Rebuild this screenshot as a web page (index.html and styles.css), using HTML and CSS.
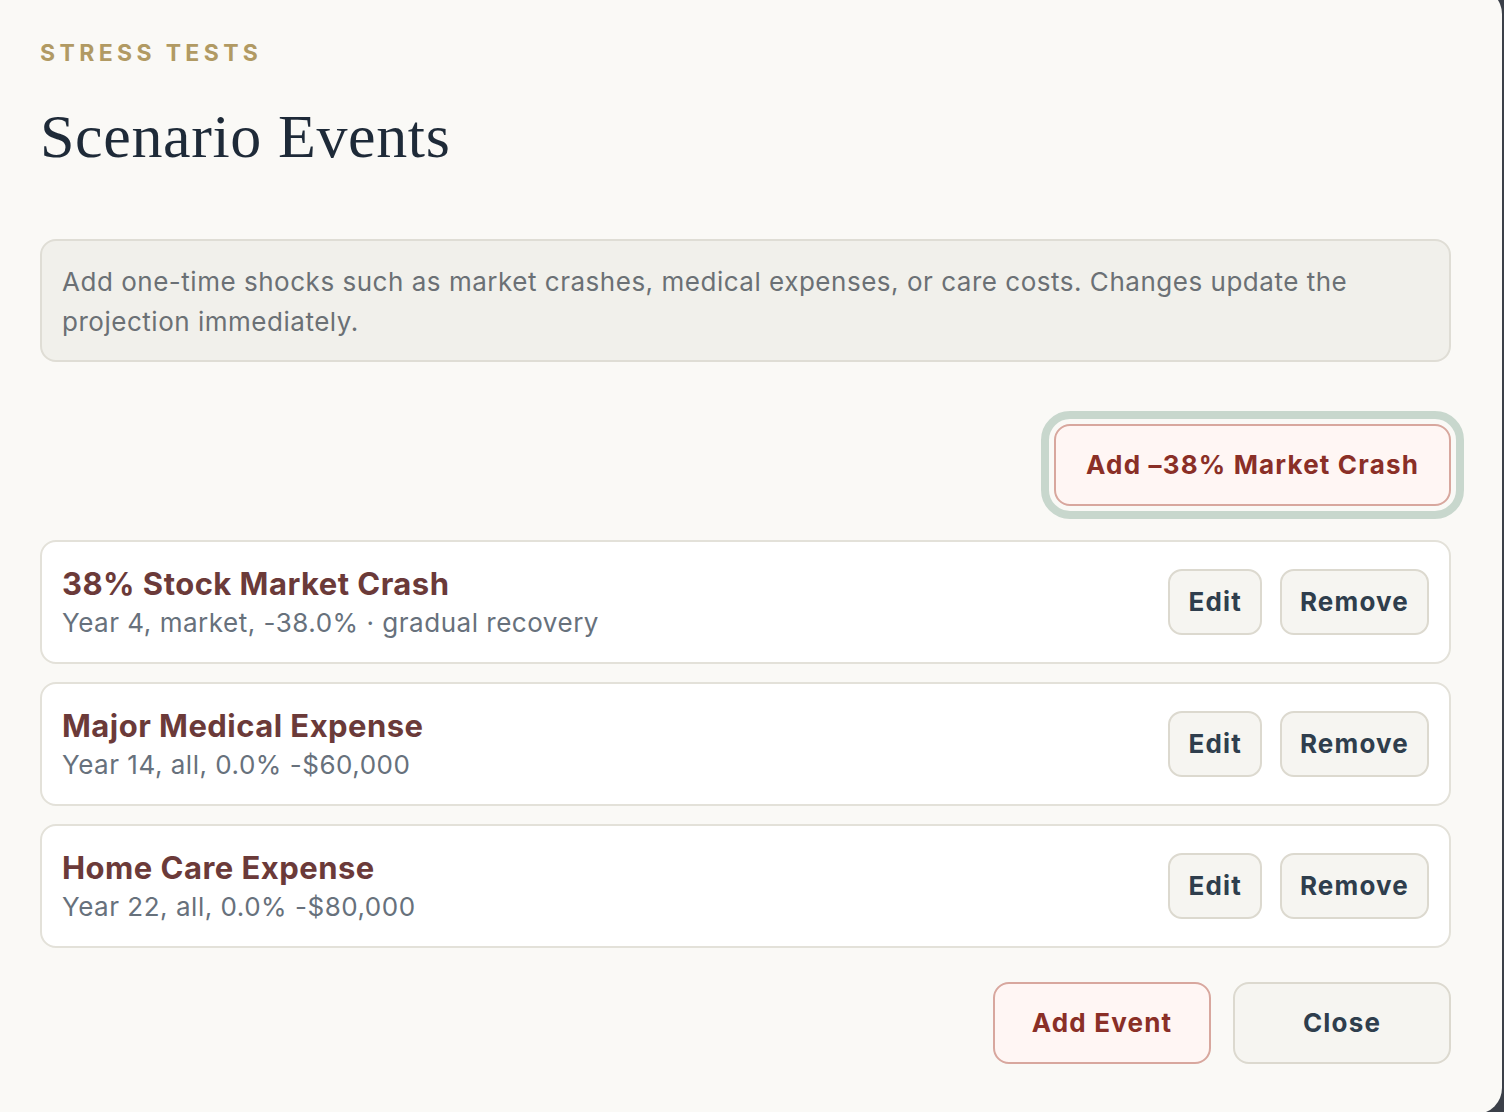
FILE: index.html
```html
<!DOCTYPE html>
<html lang="en">
<head>
<meta charset="utf-8">
<title>Scenario Events</title>
<link rel="stylesheet" href="styles.css">
</head>
<body>
<div class="modal">
  <div class="eyebrow">STRESS TESTS</div>
  <h1 class="title">Scenario Events</h1>
  <div class="info">Add one-time shocks such as market crashes, medical expenses, or care costs. Changes update the projection immediately.</div>
  <div class="quick-row">
    <button class="btn btn-danger btn-lg btn-quick focused">Add –38% Market Crash</button>
  </div>
  <div class="events">
    <div class="event">
      <div class="event-text">
        <div class="event-name">38% Stock Market Crash</div>
        <div class="event-meta">Year 4, market, -38.0% · gradual recovery</div>
      </div>
      <div class="event-actions">
        <button class="btn btn-neutral btn-sm">Edit</button>
        <button class="btn btn-neutral btn-sm">Remove</button>
      </div>
    </div>
    <div class="event">
      <div class="event-text">
        <div class="event-name">Major Medical Expense</div>
        <div class="event-meta">Year 14, all, 0.0% -$60,000</div>
      </div>
      <div class="event-actions">
        <button class="btn btn-neutral btn-sm">Edit</button>
        <button class="btn btn-neutral btn-sm">Remove</button>
      </div>
    </div>
    <div class="event">
      <div class="event-text">
        <div class="event-name">Home Care Expense</div>
        <div class="event-meta">Year 22, all, 0.0% -$80,000</div>
      </div>
      <div class="event-actions">
        <button class="btn btn-neutral btn-sm">Edit</button>
        <button class="btn btn-neutral btn-sm">Remove</button>
      </div>
    </div>
  </div>
  <div class="footer">
    <button class="btn btn-danger btn-lg btn-wide">Add Event</button>
    <button class="btn btn-neutral btn-lg btn-wide">Close</button>
  </div>
</div>
</body>
</html>
```

FILE: styles.css
```css
html, body {
  margin: 0;
  padding: 0;
  background: #3b4049;
  height: 100%;
  overflow: hidden;
}

.modal {
  box-sizing: border-box;
  width: 1502px;
  height: 1126px;
  margin-top: -12px;
  padding: 52px 51px 0 40px;
  background: #faf9f6;
  border-radius: 0 26px 26px 0;
  font-family: Inter, "Noto Sans", sans-serif;
}

.eyebrow {
  font-size: 23px;
  line-height: 26px;
  font-weight: 700;
  letter-spacing: 0.19em;
  color: #b19a63;
}

.title {
  margin: 34px 0 0;
  font-family: "Liberation Serif", "Times New Roman", serif;
  font-weight: 400;
  font-size: 62px;
  line-height: 72px;
  letter-spacing: 0.01em;
  color: #1e2a38;
}

.info {
  margin-top: 67px;
  padding: 21px 20px 18px;
  background: #f1f0eb;
  border: 2px solid #dfddd5;
  border-radius: 16px;
  font-size: 26px;
  line-height: 40px;
  letter-spacing: 0.02em;
  color: #6b7075;
}

.quick-row {
  display: flex;
  justify-content: flex-end;
  margin-top: 62px;
}

.btn {
  box-sizing: border-box;
  font-family: Inter, "Noto Sans", sans-serif;
  font-weight: 700;
  font-size: 26px;
  line-height: 30px;
  letter-spacing: 0.045em;
  border-radius: 16px;
  border: 2px solid;
  cursor: pointer;
}

.btn-lg {
  height: 82px;
  padding: 0 32px;
}

.btn-quick {
  padding: 0 30px;
}

.btn-sm {
  height: 66px;
  padding: 0 18px;
  border-radius: 14px;
}

.btn-wide {
  width: 218px;
  padding-left: 0;
  padding-right: 0;
}

.btn-danger {
  background: #fff6f4;
  border-color: #d8a79e;
  color: #8a2f27;
}

.btn-neutral {
  background: #f6f5f1;
  border-color: #dcd9cf;
  color: #2f3e4d;
}

.focused {
  outline: 8px solid #c8d7cd;
  outline-offset: 5px;
}

.events {
  display: flex;
  flex-direction: column;
  gap: 18px;
  margin-top: 34px;
}

.event {
  display: flex;
  align-items: center;
  justify-content: space-between;
  height: 124px;
  box-sizing: border-box;
  padding: 2px 20px 0;
  background: #ffffff;
  border: 2px solid #e3e1d9;
  border-radius: 16px;
}

.event-actions {
  display: flex;
  gap: 18px;
  margin-top: -2px;
}

.event-name {
  font-size: 31px;
  line-height: 38px;
  font-weight: 700;
  letter-spacing: 0.015em;
  color: #6b3a39;
}

.event-meta {
  margin-top: 2px;
  font-size: 26px;
  line-height: 36px;
  letter-spacing: 0.02em;
  color: #67717c;
}

.footer {
  display: flex;
  justify-content: flex-end;
  gap: 22px;
  margin-top: 34px;
}
```
